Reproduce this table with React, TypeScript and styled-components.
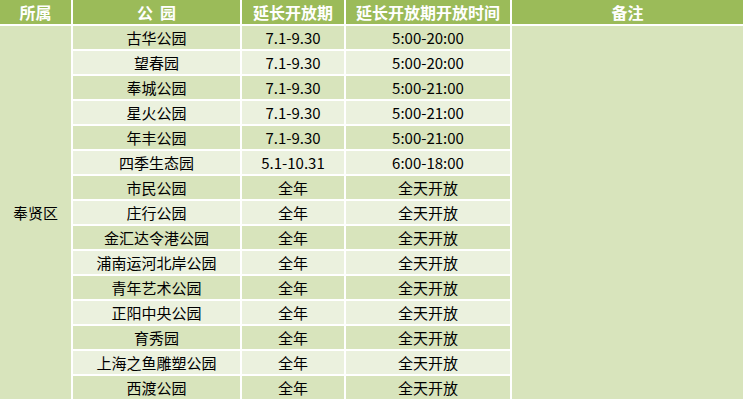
import React from "react";
import styled, { createGlobalStyle } from "styled-components";

const Global = createGlobalStyle`
  html, body { margin: 0; padding: 0; background: #ffffff; }
  body { font-family: "Noto Sans CJK SC", "Noto Sans", sans-serif; }
`;

const Table = styled.div`
  display: grid;
  grid-template-columns: 71px 167px 102px 164px 231px;
  grid-template-rows: 24px repeat(15, 23px);
  column-gap: 2px;
  row-gap: 2px;
  width: 743px;
  background: #ffffff;
`;

const HeadCell = styled.div<{ $spaced?: boolean }>`
  background: #9bbb59;
  color: #ffffff;
  font-weight: 700;
  font-size: 16px;
  letter-spacing: ${(p) => (p.$spaced ? "7px" : "0")};
  text-indent: ${(p) => (p.$spaced ? "7px" : "0")};
  display: flex;
  align-items: center;
  justify-content: center;
  white-space: nowrap;
  line-height: 1;
`;

const Cell = styled.div<{ $light?: boolean; $col?: number }>`
  grid-column: ${(p) => p.$col ?? "auto"};
  background: ${(p) => (p.$light ? "#ebf1de" : "#d8e4bc")};
  color: #000000;
  font-size: 15px;
  display: flex;
  align-items: center;
  justify-content: center;
  white-space: nowrap;
  line-height: 1;
`;

const MergedCell = styled.div<{ $col: number }>`
  grid-column: ${(p) => p.$col};
  grid-row: 2 / span 15;
  background: #d8e4bc;
  color: #000000;
  font-size: 15px;
  display: flex;
  align-items: center;
  justify-content: center;
  white-space: nowrap;
`;

const rows: [string, string, string][] = [
  ["古华公园", "7.1-9.30", "5:00-20:00"],
  ["望春园", "7.1-9.30", "5:00-20:00"],
  ["奉城公园", "7.1-9.30", "5:00-21:00"],
  ["星火公园", "7.1-9.30", "5:00-21:00"],
  ["年丰公园", "7.1-9.30", "5:00-21:00"],
  ["四季生态园", "5.1-10.31", "6:00-18:00"],
  ["市民公园", "全年", "全天开放"],
  ["庄行公园", "全年", "全天开放"],
  ["金汇达令港公园", "全年", "全天开放"],
  ["浦南运河北岸公园", "全年", "全天开放"],
  ["青年艺术公园", "全年", "全天开放"],
  ["正阳中央公园", "全年", "全天开放"],
  ["育秀园", "全年", "全天开放"],
  ["上海之鱼雕塑公园", "全年", "全天开放"],
  ["西渡公园", "全年", "全天开放"],
];

export default function App() {
  return (
    <>
      <Global />
      <Table>
        <HeadCell>所属</HeadCell>
        <HeadCell $spaced>公园</HeadCell>
        <HeadCell>延长开放期</HeadCell>
        <HeadCell>延长开放期开放时间</HeadCell>
        <HeadCell>备注</HeadCell>
        <MergedCell $col={1}>奉贤区</MergedCell>
        <MergedCell $col={5} />
        {rows.map(([park, period, time], i) => (
          <React.Fragment key={park}>
            <Cell $light={i % 2 === 1} $col={2}>{park}</Cell>
            <Cell $light={i % 2 === 1}>{period}</Cell>
            <Cell $light={i % 2 === 1}>{time}</Cell>
          </React.Fragment>
        ))}
      </Table>
    </>
  );
}
